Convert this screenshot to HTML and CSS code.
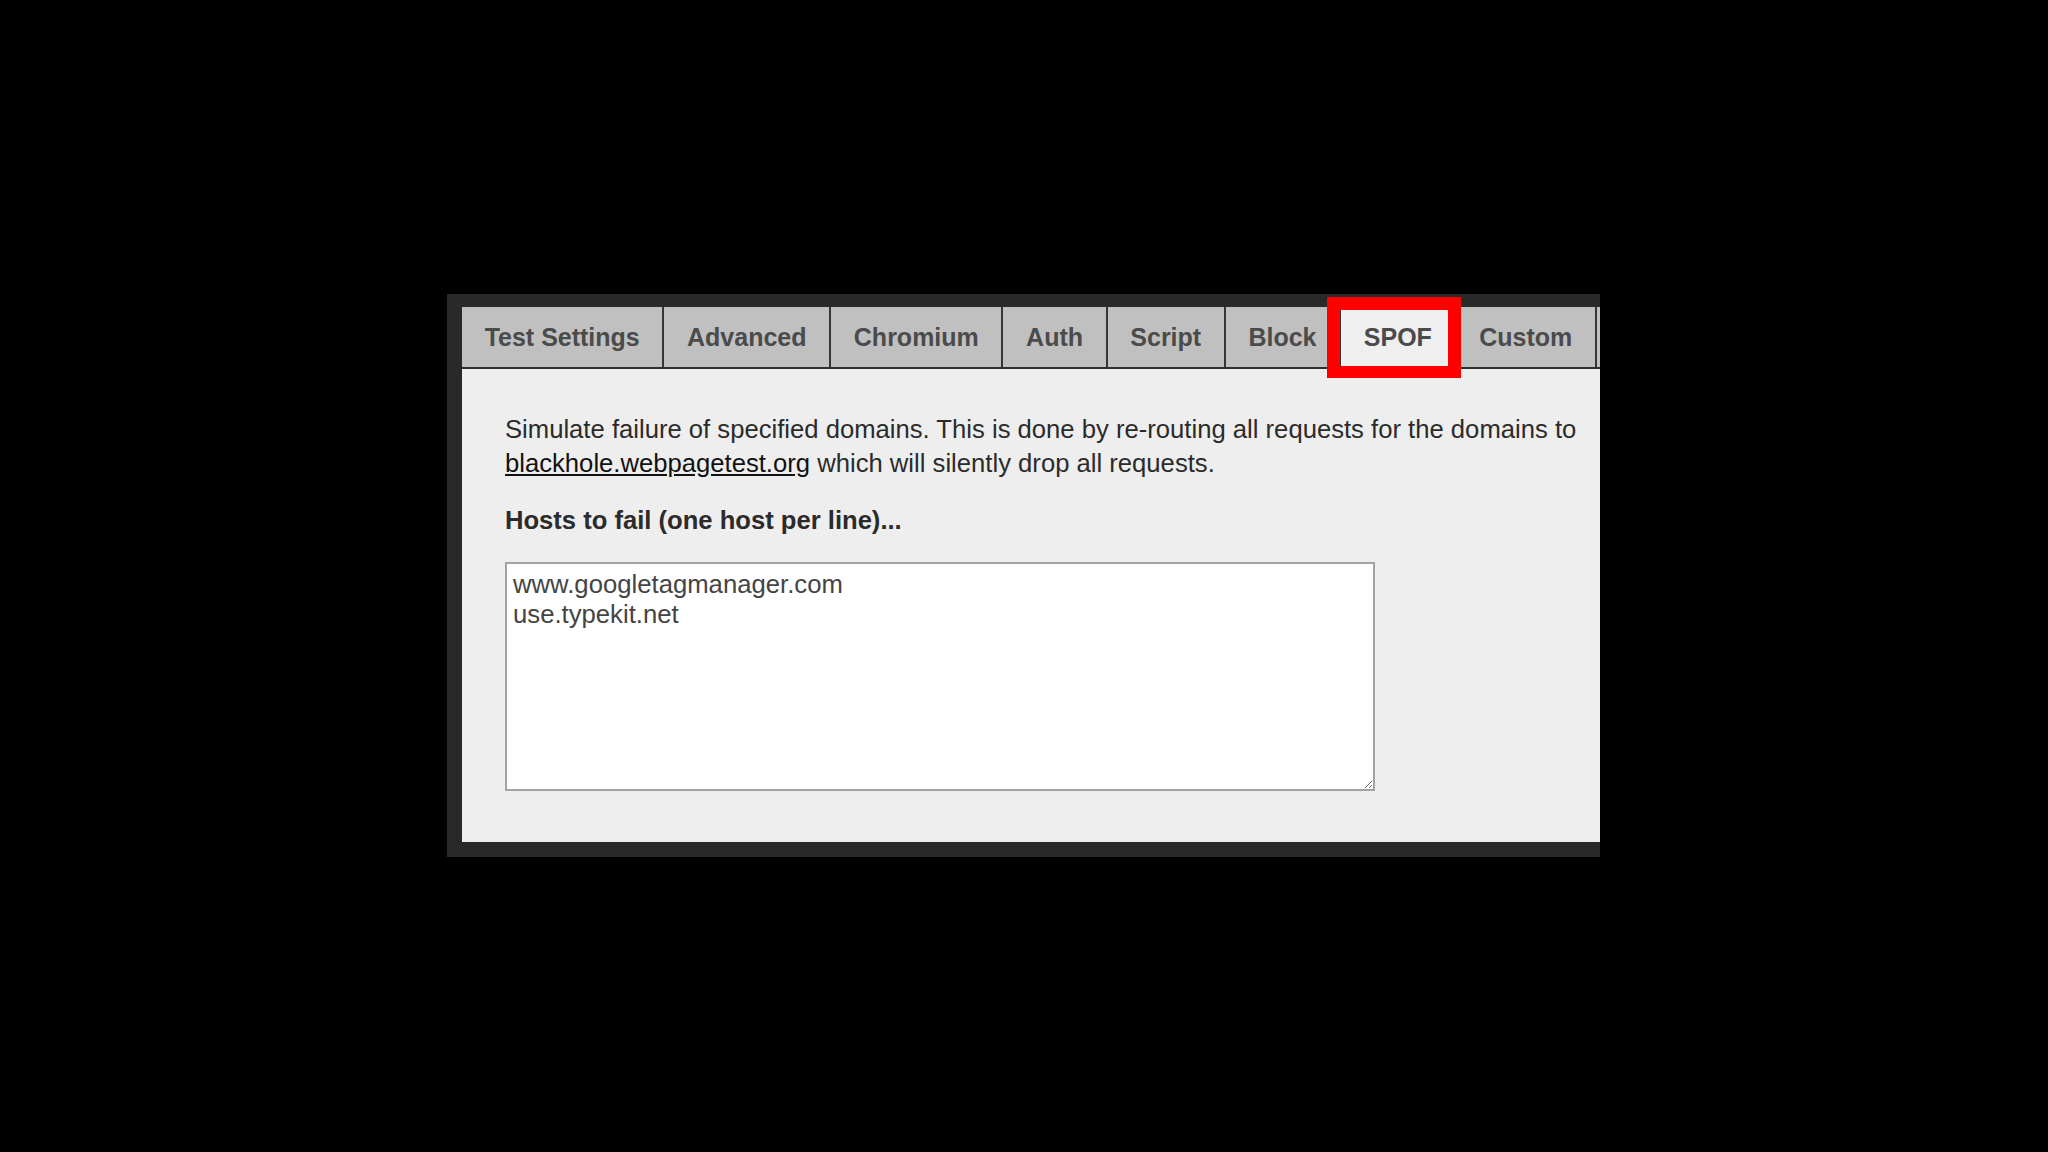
FILE: index.html
```html
<!DOCTYPE html>
<html lang="en">
<head>
<meta charset="utf-8">
<title>SPOF settings</title>
<link rel="stylesheet" href="styles.css">
</head>
<body>
<div class="panel">
  <div class="tabs">
    <div class="tab">Test Settings</div>
    <div class="tab">Advanced</div>
    <div class="tab">Chromium</div>
    <div class="tab">Auth</div>
    <div class="tab">Script</div>
    <div class="tab">Block</div>
    <div class="tab active">SPOF<span class="highlight"></span></div>
    <div class="tab">Custom</div>
  </div>
  <div class="content">
    <p class="intro">Simulate failure of specified domains. This is done by re-routing all requests for the domains to <a href="#" class="link">blackhole.webpagetest.org</a> which will silently drop all requests.</p>
    <label class="label" for="hosts">Hosts to fail (one host per line)...</label>
    <textarea id="hosts" class="hosts">www.googletagmanager.com
use.typekit.net</textarea>
  </div>
</div>
</body>
</html>
```
FILE: styles.css
```css
html, body {
  margin: 0;
  padding: 0;
  background: #000;
  height: 1152px;
  overflow: hidden;
  font-family: "Liberation Sans", Arial, sans-serif;
}

.panel {
  box-sizing: border-box;
  margin: 294px 0 0 447px;
  width: 1153px;
  background: #2a2929;
  padding: 13px 0 15px 15px;
}

.tabs {
  display: flex;
  height: 60px;
  background: #c0c0c0;
  border-bottom: 2px solid #2e2e2e;
}

.tab {
  position: relative;
  padding: 0 22.65px;
  border-right: 2px solid #363636;
  font-size: 25px;
  font-weight: bold;
  line-height: 60px;
  color: #4b4b4b;
  white-space: nowrap;
}

.tab.active {
  background: #efefef;
}

.highlight {
  position: absolute;
  left: -14px;
  right: -6px;
  top: -10px;
  bottom: -11px;
  border: 13px solid #ff0000;
  border-bottom-width: 12px;
}

.content {
  background: #efeeee;
  padding: 43px 20px 51px 43px;
}

.intro {
  margin: 0;
  font-size: 25.65px;
  line-height: 34px;
  color: #2b2b2b;
}

.link {
  color: #111;
  text-decoration: underline;
}

.label {
  display: block;
  margin-top: 23px;
  font-size: 25.6px;
  font-weight: bold;
  line-height: 34px;
  color: #2b2b2b;
}

.hosts {
  display: block;
  box-sizing: border-box;
  margin-top: 25px;
  width: 870px;
  height: 229px;
  padding: 6px 6px 4px;
  border: 2px solid #a3a3a3;
  background: #fff;
  font-family: "Liberation Sans", Arial, sans-serif;
  font-size: 25.7px;
  line-height: 29.5px;
  color: #444;
  resize: both;
}
```
